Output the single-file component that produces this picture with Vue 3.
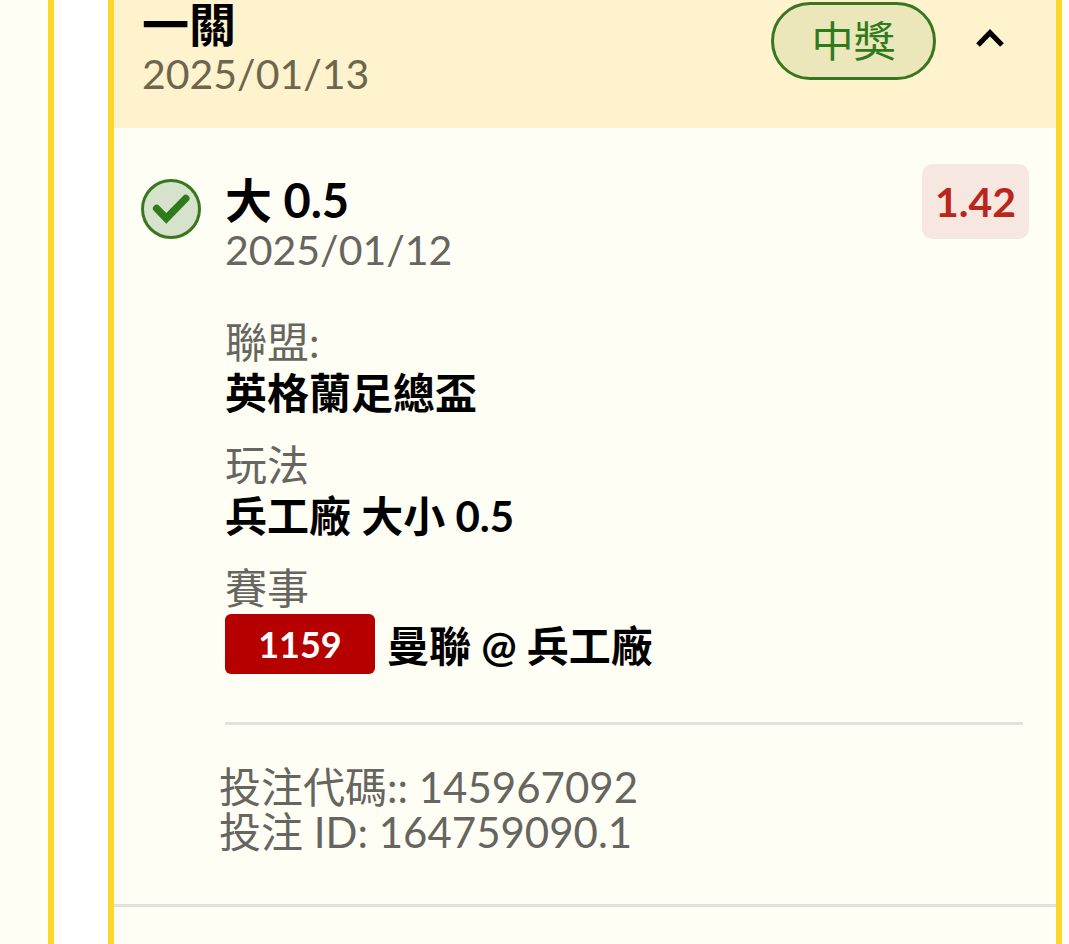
<script setup>
import { ref } from 'vue'

const open = ref(true)
const details = [
  { label: '聯盟:', value: '英格蘭足總盃' },
  { label: '玩法', value: '兵工廠 大小 0.5' },
]
</script>

<template>
  <main class="page">
    <aside class="side"></aside>
    <article class="slip">
      <header class="head">
        <div class="head-text">
          <h1 class="title">一關</h1>
          <p class="muted date">2025/01/13</p>
        </div>
        <span class="status">中獎</span>
        <button class="toggle" type="button" aria-label="展開" :aria-expanded="open" @click="open = !open">
          <svg viewBox="0 0 30 20" width="30" height="20" aria-hidden="true">
            <path d="M3 17 L15 4.800 L27 17" fill="none" stroke="#000" stroke-width="5.200" />
          </svg>
        </button>
      </header>

      <section v-if="open" class="bet">
        <div class="row">
          <svg class="check" viewBox="0 0 60 60" width="60" height="60" aria-hidden="true">
            <circle cx="30" cy="30" r="28.500" fill="#d6e2cc" stroke="#38761f" stroke-width="3" />
            <path d="M15.700 29.500 L25.300 39.300 L44.700 19.500" fill="none" stroke="#2f7a1c" stroke-width="7.500" stroke-linecap="round" />
          </svg>
          <div class="info">
            <h2 class="title">大 0.5</h2>
            <p class="muted date">2025/01/12</p>
            <dl class="details">
              <div v-for="d in details" :key="d.label" class="pair">
                <dt>{{ d.label }}</dt>
                <dd>{{ d.value }}</dd>
              </div>
              <div class="pair">
                <dt>賽事</dt>
                <dd class="match"><span class="code">1159</span><span class="teams">曼聯 @ 兵工廠</span></dd>
              </div>
            </dl>
          </div>
          <span class="odds">1.42</span>
        </div>
        <hr class="rule" />
        <div class="ids muted">
          <p>投注代碼:: 145967092</p>
          <p>投注 ID: 164759090.1</p>
        </div>
      </section>
    </article>
  </main>
</template>

<style>
body {
  margin: 0;
  background: #fff;
}
</style>

<style scoped>
.page {
  display: flex;
  gap: 54px;
  min-height: 100vh;
  padding-right: 7px;
  box-sizing: border-box;
  font-family: Lato, "Noto Sans CJK TC", sans-serif;
  font-size: 42px;
  color: #000;
}
h1, h2, p, dl, dd {
  margin: 0;
}
.side {
  width: 48px;
  flex: none;
  background: #fffef5;
  border-right: 6px solid #ffd62a;
}
.slip {
  flex: 1;
  background: #fffef5;
  border: 0 solid #ffd62a;
  border-width: 0 6px;
}
.head {
  display: flex;
  align-items: flex-start;
  padding: 0 51px 30px 28px;
  background: #fff3cd;
}
.head-text {
  flex: 1;
}
.title {
  font-size: 47px;
  line-height: 48px;
  padding-bottom: 2px;
  font-weight: 700;
}
.muted {
  color: #66655f;
}
.date {
  font-size: 41px;
  line-height: 48px;
}
.head .date {
  color: #6d664f;
}
.status {
  box-sizing: border-box;
  min-width: 165px;
  margin-top: 2px;
  border: 3px solid #38761f;
  border-radius: 39px;
  background: #ebe7ba;
  color: #2f7a1c;
  line-height: 72px;
  text-align: center;
}
.toggle {
  display: flex;
  margin: 28px 0 0 39px;
  padding: 0;
  border: 0;
  background: none;
}
.bet {
  padding: 36px 27px 49px;
  border-bottom: 3px solid #e4e1db;
}
.row {
  display: flex;
  align-items: flex-start;
  gap: 24px;
}
.check {
  flex: none;
  margin-top: 15px;
}
.info {
  flex: 1;
  padding-top: 12px;
}
.details {
  display: grid;
  gap: 23px;
  margin-top: 44px;
  line-height: 50px;
}
dt {
  padding-bottom: 2px;
  line-height: 48px;
  color: #66655f;
}
dd {
  font-weight: 700;
}
.match {
  display: flex;
  align-items: center;
  gap: 12px;
}
.code {
  width: 150px;
  border-radius: 6px;
  background: #b60000;
  color: #fff;
  font-size: 36px;
  line-height: 60px;
  text-align: center;
}
.teams {
  padding-top: 4px;
}
.odds {
  padding: 0 13px;
  border-radius: 10px;
  background: #f6e7e0;
  color: #b9261c;
  font-size: 41px;
  font-weight: 700;
  line-height: 75px;
}
.rule {
  height: 3px;
  margin: 48px 6px 0 84px;
  border: 0;
  background: #e4e1db;
}
.ids {
  margin: 40px 0 0 78px;
  line-height: 45px;
}
</style>
